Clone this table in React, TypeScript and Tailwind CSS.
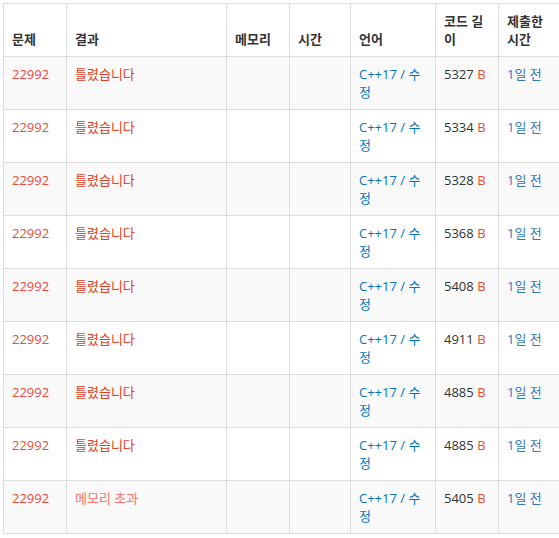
const rows = [
  { id: 22992, result: '틀렸습니다', len: 5327 },
  { id: 22992, result: '틀렸습니다', len: 5334 },
  { id: 22992, result: '틀렸습니다', len: 5328 },
  { id: 22992, result: '틀렸습니다', len: 5368 },
  { id: 22992, result: '틀렸습니다', len: 5408 },
  { id: 22992, result: '틀렸습니다', len: 4911 },
  { id: 22992, result: '틀렸습니다', len: 4885 },
  { id: 22992, result: '틀렸습니다', len: 4885 },
  { id: 22992, result: '메모리 초과', len: 5405 },
]

const cell = 'border border-[#dddddd] px-2 py-2 align-top'

export default function App() {
  return (
    <div
      className="w-[559px] h-[538px] overflow-hidden bg-white pt-[3px] pl-[3px] text-[13px] leading-[18px] text-[#333333]"
      style={{ fontFamily: '"Open Sans", "Noto Sans CJK KR", sans-serif' }}
    >
      <table className="border-collapse table-fixed w-[600px]">
        <colgroup>
          <col className="w-[63px]" />
          <col className="w-[160px]" />
          <col className="w-[63px]" />
          <col className="w-[61px]" />
          <col className="w-[85px]" />
          <col className="w-[63px]" />
          <col className="w-[105px]" />
        </colgroup>
        <thead>
          <tr className="h-[53px]">
            {['문제', '결과', '메모리', '시간', '언어', '코드 길이', '제출한 시간'].map((h, i) => (
              <th key={i} className="border border-[#dddddd] px-2 py-2 align-bottom text-left font-bold">
                {i === 5 ? (
                  <>코드 길<br />이</>
                ) : i === 6 ? (
                  <>제출한<br />시간</>
                ) : (
                  h
                )}
              </th>
            ))}
          </tr>
        </thead>
        <tbody>
          {rows.map((r, i) => (
            <tr key={i} className={`h-[53px] ${i % 2 === 0 ? 'bg-[#f9f9f9]' : 'bg-white'}`}>
              <td className={`${cell} text-[#e74c3c]`}>{r.id}</td>
              <td className={`${cell} ${r.result === '메모리 초과' ? 'text-[#fa7268]' : 'text-[#dd4124]'}`}>
                {r.result}
              </td>
              <td className={cell}></td>
              <td className={cell}></td>
              <td className={`${cell} text-[#0076c0]`}>
                C++17 / 수<br />정
              </td>
              <td className={cell}>
                {r.len} <span className="text-[#e74c3c]">B</span>
              </td>
              <td className={`${cell} text-[#337ab7]`}>1일 전</td>
            </tr>
          ))}
        </tbody>
      </table>
    </div>
  )
}
